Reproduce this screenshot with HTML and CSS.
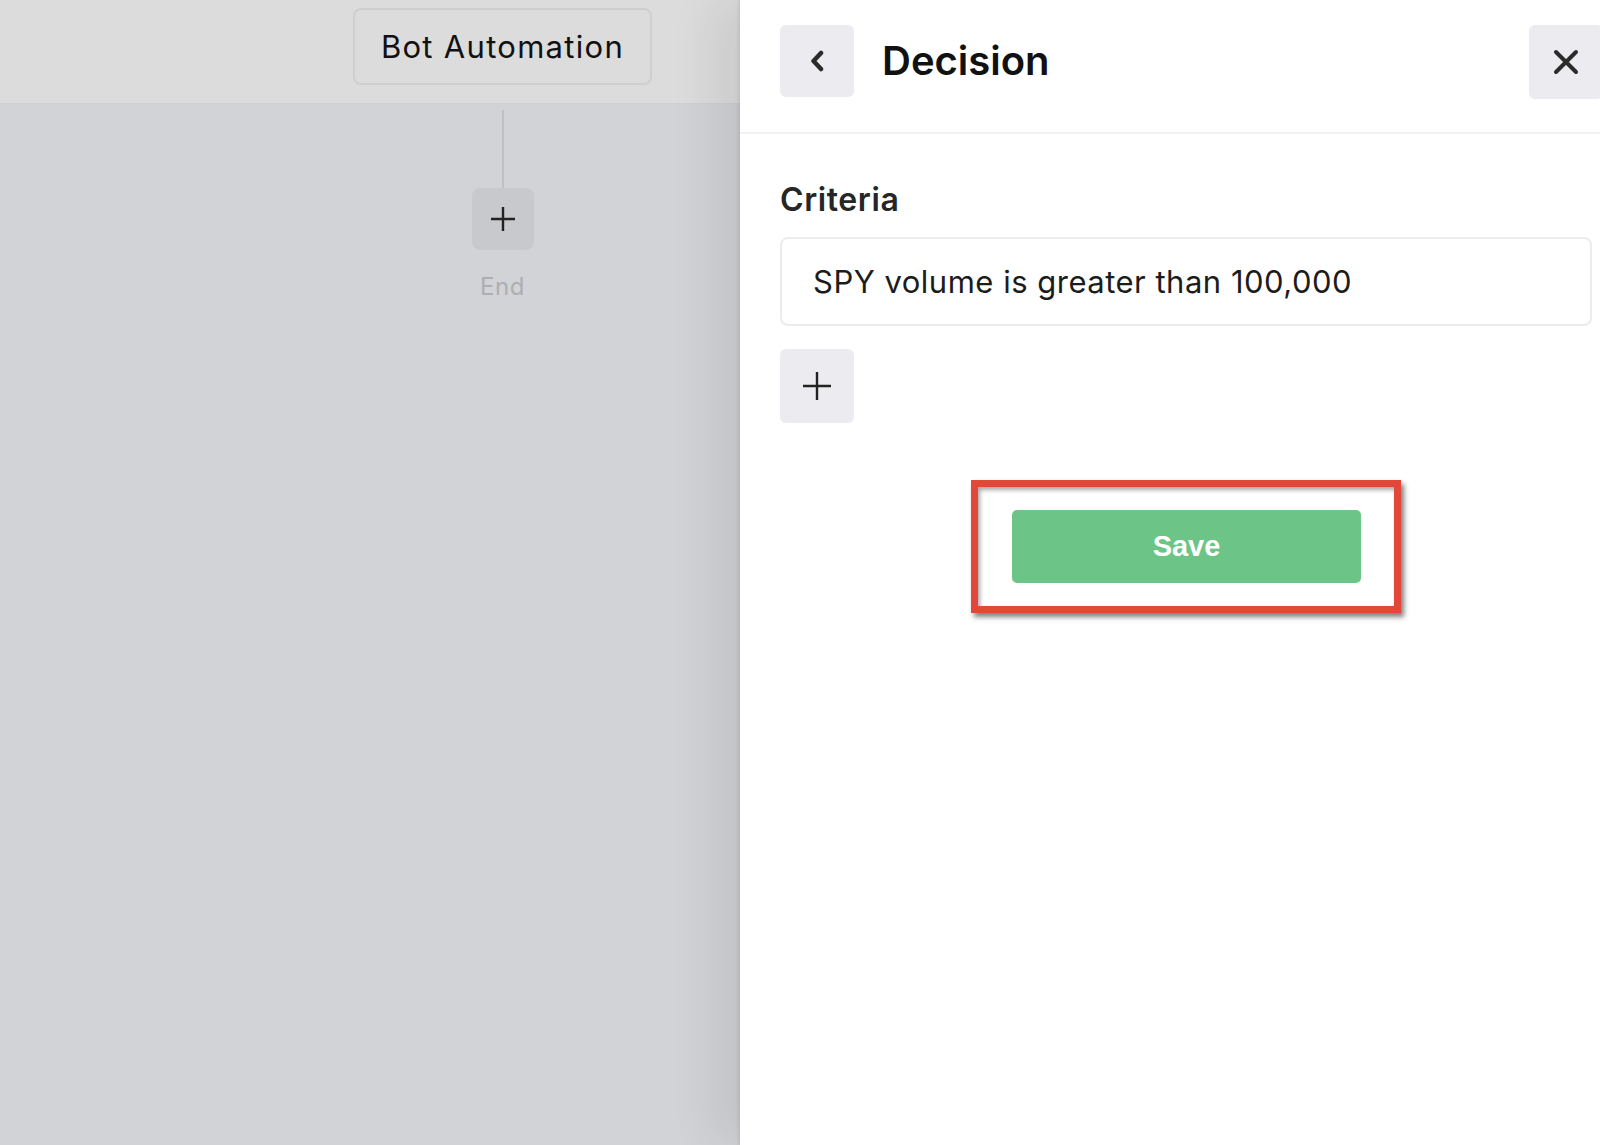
FILE: index.html
```html
<!DOCTYPE html>
<html lang="en">
<head>
    <meta charset="UTF-8">
    <meta name="viewport" content="width=device-width, initial-scale=1.0">
    <title>Decision</title>
    <link rel="stylesheet" href="styles.css">
</head>
<body>
    <div class="canvas">
        <div class="canvas-top">
            <div class="start-node">Bot Automation</div>
        </div>
        <div class="flow">
            <div class="flow-line"></div>
            <button class="flow-add">
                <svg width="26" height="26" viewBox="0 0 26 26"><path d="M13 1v24M1 13h24" stroke="#222" stroke-width="2.4" fill="none"/></svg>
            </button>
            <div class="flow-end">End</div>
        </div>
    </div>

    <div class="panel">
        <div class="panel-header">
            <button class="icon-btn">
                <svg width="16" height="22" viewBox="0 0 16 22"><path d="M12 3L4.5 11l7.5 8" stroke="#2b2b2b" stroke-width="4.5" stroke-linecap="round" stroke-linejoin="round" fill="none"/></svg>
            </button>
            <h1 class="panel-title">Decision</h1>
            <button class="icon-btn close-btn">
                <svg width="26" height="26" viewBox="0 0 26 26"><path d="M3 3l20 20M23 3L3 23" stroke="#2b2b2b" stroke-width="4" stroke-linecap="round" fill="none"/></svg>
            </button>
        </div>
        <div class="panel-body">
            <label class="field-label" for="criteria">Criteria</label>
            <input class="field-input" type="text" id="criteria" value="SPY volume is greater than 100,000">
            <button class="icon-btn add-btn">
                <svg width="30" height="30" viewBox="0 0 30 30"><path d="M15 1v28M1 15h28" stroke="#222" stroke-width="2.4" fill="none"/></svg>
            </button>
            <div class="save-row">
                <div class="highlight">
                    <button class="save-btn">Save</button>
                </div>
            </div>
        </div>
    </div>
</body>
</html>
```

FILE: styles.css
```css
body {
    margin: 0;
    padding: 0;
    display: flex;
    height: 100vh;
    overflow: hidden;
    font-family: Inter, "Liberation Sans", sans-serif;
    color: #1c1c1c;
}

button {
    font-family: inherit;
    border: none;
    cursor: pointer;
    padding: 0;
}

/* left: flow canvas under the overlay */
.canvas {
    width: 740px;
    flex-shrink: 0;
    background-color: #d2d3d6;
}

.canvas-top {
    height: 104px;
    box-sizing: border-box;
    padding: 8px 0 0 353px;
    background-color: #dcdcdc;
    border-bottom: 1px solid #d0d0d2;
}

.start-node {
    width: 299px;
    height: 77px;
    box-sizing: border-box;
    border: 2px solid #cfcfcf;
    border-radius: 8px;
    display: flex;
    align-items: center;
    justify-content: center;
    font-size: 31px;
    letter-spacing: 1.3px;
    color: #111;
}

.flow {
    width: 299px;
    margin-left: 353px;
    display: flex;
    flex-direction: column;
    align-items: center;
}

.flow-line {
    width: 2px;
    height: 78px;
    margin-top: 6px;
    background-color: #bfc0c3;
}

.flow-add {
    width: 62px;
    height: 62px;
    border-radius: 8px;
    background-color: #c8c9cd;
    display: flex;
    align-items: center;
    justify-content: center;
}

.flow-end {
    margin-top: 22px;
    font-size: 24px;
    letter-spacing: 0.5px;
    color: #adaeb1;
}

/* right: side panel */
.panel {
    flex: 1;
    background-color: #fff;
    position: relative;
    z-index: 1;
    box-shadow: -2px 0 3px rgba(0, 0, 0, 0.08), -30px 0 40px rgba(0, 0, 0, 0.07);
    overflow: hidden;
}

.panel-header {
    height: 134px;
    box-sizing: border-box;
    padding: 25px 0 0 40px;
    display: flex;
    align-items: flex-start;
    border-bottom: 2px solid #f1f1f3;
}

.icon-btn {
    width: 74px;
    height: 72px;
    border-radius: 6px;
    background-color: #ececf0;
    display: flex;
    align-items: center;
    justify-content: center;
    flex-shrink: 0;
}

.panel-title {
    margin: 0 0 0 28px;
    font-size: 40px;
    font-weight: 600;
    line-height: 72px;
    color: #111;
}

.close-btn {
    margin-left: auto;
    height: 74px;
    margin-right: -3px;
}

.panel-body {
    padding: 46px 8px 0 40px;
}

.field-label {
    display: block;
    font-size: 32px;
    font-weight: 600;
    letter-spacing: 0.6px;
    line-height: 40px;
    color: #262626;
}

.field-input {
    display: block;
    width: 100%;
    height: 89px;
    margin-top: 17px;
    box-sizing: border-box;
    border: 2px solid #ececec;
    border-radius: 8px;
    padding: 0 0 0 31px;
    font-family: inherit;
    font-size: 31px;
    letter-spacing: 0.5px;
    color: #1c1c1c;
    outline: none;
}

.add-btn {
    height: 74px;
    margin-top: 23px;
}

.save-row {
    display: flex;
    justify-content: center;
    margin-top: 57px;
}

.highlight {
    border: 7px solid #e2473a;
    padding: 23px 33px 23px 34px;
    box-shadow: 3px 4px 5px rgba(0, 0, 0, 0.5), inset 2px 3px 4px rgba(0, 0, 0, 0.35);
}

.save-btn {
    display: block;
    width: 349px;
    height: 73px;
    border-radius: 5px;
    background-color: #6cc487;
    color: #fff;
    font-family: "Liberation Sans", Arial, sans-serif;
    font-size: 29px;
    font-weight: bold;
}
```
